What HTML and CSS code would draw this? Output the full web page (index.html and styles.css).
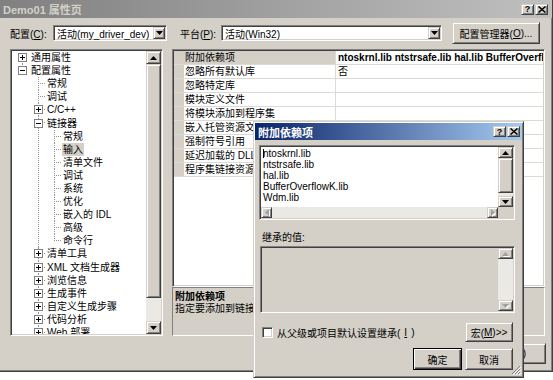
FILE: index.html
```html
<!DOCTYPE html>
<html>
<head>
  <meta charset="utf-8">
  <title>Demo01 属性页</title>
  <link rel="stylesheet" href="styles.css">
</head>
<body>
  <div class="win">
    <div class="caption inactive">
      <span class="caption-text">Demo01 属性页</span>
      <span class="cap-btns">
        <span class="cap-btn raised">?</span>
        <span class="cap-btn raised"><svg width="8" height="7" viewBox="0 0 8 7"><path d="M0.5 0.5l7 6M7.5 0.5l-7 6" stroke="#000" stroke-width="1.5"/></svg></span>
      </span>
    </div>

    <div class="toolbar">
      <span class="lbl lbl-cfg">配置(<u>C</u>):</span>
      <div class="combo combo-cfg">
        <span class="combo-text">活动(my_driver_dev)</span>
        <span class="drop raised"><svg width="7" height="4" viewBox="0 0 7 4"><path d="M0 0h7L3.5 4z"/></svg></span>
      </div>
      <span class="lbl lbl-plat">平台(<u>P</u>):</span>
      <div class="combo combo-plat">
        <span class="combo-text">活动(Win32)</span>
        <span class="drop raised"><svg width="7" height="4" viewBox="0 0 7 4"><path d="M0 0h7L3.5 4z"/></svg></span>
      </div>
      <span class="btn raised btn-mgr">配置管理器(<u>O</u>)...</span>
    </div>

    <div class="content">
      <div class="tree sunken">
        <ul class="tree-list">
          <li class="l0 first">
            <div class="row"><svg class="pm" width="9" height="9" viewBox="0 0 9 9"><rect x=".5" y=".5" width="8" height="8" fill="#fff" stroke="#808080"/><path d="M2 4.5h5M4.5 2v5" stroke="#000"/></svg><span class="t">通用属性</span></div>
          </li>
          <li class="l0 end">
            <div class="row"><svg class="pm" width="9" height="9" viewBox="0 0 9 9"><rect x=".5" y=".5" width="8" height="8" fill="#fff" stroke="#808080"/><path d="M2 4.5h5" stroke="#000"/></svg><span class="t">配置属性</span></div>
            <ul>
              <li class="l1 leaf"><div class="row"><span class="t">常规</span></div></li>
              <li class="l1 leaf"><div class="row"><span class="t">调试</span></div></li>
              <li class="l1"><div class="row"><svg class="pm" width="9" height="9" viewBox="0 0 9 9"><rect x=".5" y=".5" width="8" height="8" fill="#fff" stroke="#808080"/><path d="M2 4.5h5M4.5 2v5" stroke="#000"/></svg><span class="t">C/C++</span></div></li>
              <li class="l1">
                <div class="row"><svg class="pm" width="9" height="9" viewBox="0 0 9 9"><rect x=".5" y=".5" width="8" height="8" fill="#fff" stroke="#808080"/><path d="M2 4.5h5" stroke="#000"/></svg><span class="t">链接器</span></div>
                <ul>
                  <li class="l2"><div class="row"><span class="t">常规</span></div></li>
                  <li class="l2"><div class="row"><span class="t sel">输入</span></div></li>
                  <li class="l2"><div class="row"><span class="t">清单文件</span></div></li>
                  <li class="l2"><div class="row"><span class="t">调试</span></div></li>
                  <li class="l2"><div class="row"><span class="t">系统</span></div></li>
                  <li class="l2"><div class="row"><span class="t">优化</span></div></li>
                  <li class="l2"><div class="row"><span class="t">嵌入的 IDL</span></div></li>
                  <li class="l2"><div class="row"><span class="t">高级</span></div></li>
                  <li class="l2 end"><div class="row"><span class="t">命令行</span></div></li>
                </ul>
              </li>
              <li class="l1"><div class="row"><svg class="pm" width="9" height="9" viewBox="0 0 9 9"><rect x=".5" y=".5" width="8" height="8" fill="#fff" stroke="#808080"/><path d="M2 4.5h5M4.5 2v5" stroke="#000"/></svg><span class="t">清单工具</span></div></li>
              <li class="l1"><div class="row"><svg class="pm" width="9" height="9" viewBox="0 0 9 9"><rect x=".5" y=".5" width="8" height="8" fill="#fff" stroke="#808080"/><path d="M2 4.5h5M4.5 2v5" stroke="#000"/></svg><span class="t">XML 文档生成器</span></div></li>
              <li class="l1"><div class="row"><svg class="pm" width="9" height="9" viewBox="0 0 9 9"><rect x=".5" y=".5" width="8" height="8" fill="#fff" stroke="#808080"/><path d="M2 4.5h5M4.5 2v5" stroke="#000"/></svg><span class="t">浏览信息</span></div></li>
              <li class="l1"><div class="row"><svg class="pm" width="9" height="9" viewBox="0 0 9 9"><rect x=".5" y=".5" width="8" height="8" fill="#fff" stroke="#808080"/><path d="M2 4.5h5M4.5 2v5" stroke="#000"/></svg><span class="t">生成事件</span></div></li>
              <li class="l1"><div class="row"><svg class="pm" width="9" height="9" viewBox="0 0 9 9"><rect x=".5" y=".5" width="8" height="8" fill="#fff" stroke="#808080"/><path d="M2 4.5h5M4.5 2v5" stroke="#000"/></svg><span class="t">自定义生成步骤</span></div></li>
              <li class="l1"><div class="row"><svg class="pm" width="9" height="9" viewBox="0 0 9 9"><rect x=".5" y=".5" width="8" height="8" fill="#fff" stroke="#808080"/><path d="M2 4.5h5M4.5 2v5" stroke="#000"/></svg><span class="t">代码分析</span></div></li>
              <li class="l1"><div class="row"><svg class="pm" width="9" height="9" viewBox="0 0 9 9"><rect x=".5" y=".5" width="8" height="8" fill="#fff" stroke="#808080"/><path d="M2 4.5h5M4.5 2v5" stroke="#000"/></svg><span class="t">Web 部署</span></div></li>
            </ul>
          </li>
        </ul>
        <div class="vscroll">
          <span class="sb-btn raised sb-up"><svg width="7" height="4" viewBox="0 0 7 4"><path d="M0 4h7L3.5 0z"/></svg></span>
          <span class="sb-thumb raised"></span>
          <span class="sb-track"></span>
          <span class="sb-btn raised sb-down"><svg width="7" height="4" viewBox="0 0 7 4"><path d="M0 0h7L3.5 4z"/></svg></span>
        </div>
      </div>

      <div class="props">
        <div class="grid sunken">
          <div class="prow"><span class="gut"></span><span class="pname selected">附加依赖项</span><span class="pval bold">ntoskrnl.lib ntstrsafe.lib hal.lib BufferOverflowK.lib Wdm.lib</span></div>
          <div class="prow"><span class="gut"></span><span class="pname">忽略所有默认库</span><span class="pval">否</span></div>
          <div class="prow"><span class="gut"></span><span class="pname">忽略特定库</span><span class="pval"></span></div>
          <div class="prow"><span class="gut"></span><span class="pname">模块定义文件</span><span class="pval"></span></div>
          <div class="prow"><span class="gut"></span><span class="pname">将模块添加到程序集</span><span class="pval"></span></div>
          <div class="prow"><span class="gut"></span><span class="pname">嵌入托管资源文件</span><span class="pval"></span></div>
          <div class="prow"><span class="gut"></span><span class="pname">强制符号引用</span><span class="pval"></span></div>
          <div class="prow"><span class="gut"></span><span class="pname">延迟加载的 DLL</span><span class="pval"></span></div>
          <div class="prow"><span class="gut"></span><span class="pname">程序集链接资源</span><span class="pval"></span></div>
        </div>
        <div class="desc">
          <div class="desc-title">附加依赖项</div>
          <div class="desc-text">指定要添加到链接命令行的附加项。</div>
        </div>
      </div>
    </div>

    <!-- only the apply button peeks out from under the popup -->
    <div class="footer">
      <span class="btn raised btn-main">应用(<u>A</u>)</span>
    </div>
  </div>

  <!-- 附加依赖项 popup -->
  <div class="dlg">
    <div class="caption active">
      <span class="caption-text">附加依赖项</span>
      <span class="cap-btns">
        <span class="cap-btn raised">?</span>
        <span class="cap-btn raised"><svg width="8" height="7" viewBox="0 0 8 7"><path d="M0.5 0.5l7 6M7.5 0.5l-7 6" stroke="#000" stroke-width="1.5"/></svg></span>
      </span>
    </div>
    <div class="dlg-body">
      <div class="edit sunken">
        <div class="edit-text">
          <div class="line"><span class="caret"></span>ntoskrnl.lib</div>
          <div class="line">ntstrsafe.lib</div>
          <div class="line">hal.lib</div>
          <div class="line">BufferOverflowK.lib</div>
          <div class="line">Wdm.lib</div>
        </div>
        <div class="vscroll small">
          <span class="sb-btn raised"><svg width="7" height="4" viewBox="0 0 7 4"><path d="M0 4h7L3.5 0z"/></svg></span>
          <span class="sb-thumb raised edit-thumb"></span>
          <span class="sb-track"></span>
          <span class="sb-btn raised"><svg width="7" height="4" viewBox="0 0 7 4"><path d="M0 0h7L3.5 4z"/></svg></span>
        </div>
        <div class="hscroll">
          <span class="sb-btn raised hbtn off"><svg width="4" height="7" viewBox="0 0 4 7"><path d="M4 0v7L0 3.5z"/></svg></span>
          <span class="sb-track"></span>
          <span class="sb-btn raised hbtn off"><svg width="4" height="7" viewBox="0 0 4 7"><path d="M0 0v7L4 3.5z"/></svg></span>
        </div>
        <div class="corner"></div>
      </div>

      <div class="inh-label">继承的值:</div>
      <div class="inh sunken">
        <div class="inh-text"></div>
        <div class="vscroll small">
          <span class="sb-btn raised off"><svg width="7" height="4" viewBox="0 0 7 4"><path d="M0 4h7L3.5 0z"/></svg></span>
          <span class="sb-track"></span>
          <span class="sb-btn raised off"><svg width="7" height="4" viewBox="0 0 7 4"><path d="M0 0h7L3.5 4z"/></svg></span>
        </div>
      </div>

      <div class="check-row">
        <label class="check"><span class="box sunken"></span>从父级或项目默认设置继承(<u>I</u>)</label>
        <span class="btn raised btn-macro">宏(<u>M</u>)&gt;&gt;</span>
      </div>

      <div class="btn-row">
        <span class="btn default">确定</span>
        <span class="btn raised btn-cancel">取消</span>
      </div>
    </div>
    <svg class="grip" width="10" height="10" viewBox="0 0 10 10"><path d="M9 1L1 9M9 4L4 9M9 7L7 9" stroke="#808080"/><path d="M10 2L2 10M10 5L5 10M10 8L8 10" stroke="#fff"/></svg>
  </div>
</body>
</html>
```

FILE: styles.css
```css
* {
  box-sizing: border-box;
}

body {
  margin: 0;
  width: 553px;
  height: 380px;
  overflow: hidden;
  position: relative;
  background: #fff;
  color: #000;
  font-family: "Liberation Sans Narrow", "Liberation Sans", "Noto Sans CJK SC", sans-serif;
  font-size: 10px;
}

ul {
  list-style: none;
  margin: 0;
  padding: 0;
}

/* classic 3d edges */
.raised {
  background: #d4d0c8;
  border: 1px solid;
  border-color: #d4d0c8 #404040 #404040 #d4d0c8;
  box-shadow: inset 1px 1px #fff, inset -1px -1px #808080;
}

.sunken {
  border: 1px solid;
  border-color: #808080 #fff #fff #808080;
  box-shadow: inset 1px 1px #404040, inset -1px -1px #d4d0c8;
  padding: 1px;
}

/* main window */
.win {
  width: 553px;
  height: 372px;
  background: #d4d0c8;
  border-right: 1px solid #404040;
  border-bottom: 1px solid #404040;
  box-shadow: inset -1px -1px #808080;
  display: flex;
  flex-direction: column;
}

.caption {
  height: 18px;
  display: flex;
  align-items: center;
  justify-content: space-between;
  padding: 0 4px 0 3px;
  font-weight: bold;
  font-size: 11px;
  flex-shrink: 0;
}

.caption.inactive {
  background: linear-gradient(to right, #808080, #c0c0c0);
  color: #d4d0c8;
}

.caption.active {
  background: linear-gradient(to right, #0a246a, #a6caf0);
  color: #fff;
  height: 17px;
  padding-right: 2px;
}

.cap-btns {
  display: flex;
  gap: 1px;
}

.cap-btn {
  width: 13px;
  height: 11px;
  display: flex;
  align-items: center;
  justify-content: center;
  color: #000;
  font-family: "Liberation Sans", sans-serif;
  font-size: 9px;
  font-weight: bold;
}

.toolbar {
  margin-top: 4px;
  height: 22px;
  padding-left: 10px;
  display: flex;
  align-items: center;
  flex-shrink: 0;
}

.lbl-cfg {
  width: 43px;
}

.lbl-plat {
  width: 41px;
  margin-left: 13px;
}

.combo {
  height: 16px;
  background: #fff;
  border: 1px solid;
  border-color: #808080 #fff #fff #808080;
  box-shadow: inset 1px 1px #404040, inset -1px -1px #d4d0c8;
  padding: 1px;
  display: flex;
  align-items: center;
}

.combo-cfg {
  width: 114px;
}

.combo-plat {
  width: 221px;
}

.combo-text {
  flex: 1;
  padding-left: 2px;
  white-space: nowrap;
  overflow: hidden;
}

.drop {
  width: 12px;
  height: 12px;
  display: flex;
  align-items: center;
  justify-content: center;
}

.btn {
  display: flex;
  align-items: center;
  justify-content: center;
  white-space: nowrap;
}

.btn-mgr {
  margin-left: 10px;
  width: 88px;
  height: 22px;
}

.content {
  margin-top: 5px;
  height: 287px;
  padding-left: 10px;
  display: flex;
  gap: 9px;
  flex-shrink: 0;
}

/* tree */
.tree {
  width: 153px;
  background: #fff;
  display: flex;
}

.tree-list {
  flex: 1;
  overflow: hidden;
  position: relative;
}

.tree li {
  position: relative;
}

.tree li::before {
  content: "";
  position: absolute;
  top: 0;
  bottom: 0;
  border-left: 1px dotted #909090;
}

.tree li.l0::before { left: 10px; }
.tree li.l1::before { left: 26px; }
.tree li.l2::before { left: 42px; }

.tree li.first::before {
  top: 6.5px;
}

.tree li.end::before {
  bottom: auto;
  height: 7px;
}

.row {
  position: relative;
  height: 13.1px;
  display: flex;
  align-items: center;
  white-space: nowrap;
  line-height: 13px;
}

.l1 > .row::before,
.l2 > .row::before {
  content: "";
  position: absolute;
  top: 6px;
  width: 7px;
  border-top: 1px dotted #909090;
}

.l1 > .row::before { left: 26px; }
.l2 > .row::before { left: 42px; }

.l0 > .row { padding-left: 6px; }
.l1 > .row { padding-left: 22px; }
.l1.leaf > .row { padding-left: 35px; }
.l2 > .row { padding-left: 51px; }

.pm {
  position: relative;
  z-index: 1;
  margin-right: 4px;
  flex-shrink: 0;
}

.t.sel {
  background: #d4d0c8;
  padding: 0 1px;
  margin-left: -1px;
}

/* scrollbars */
.vscroll {
  width: 15px;
  display: flex;
  flex-direction: column;
  flex-shrink: 0;
}

.sb-btn {
  height: 13px;
  display: flex;
  align-items: center;
  justify-content: center;
  flex-shrink: 0;
}

.sb-thumb {
  height: 234px;
  flex-shrink: 0;
}

.sb-track {
  flex: 1;
  background: #ebe9e4;
}

.vscroll.small .sb-btn {
  height: 11px;
}

.edit-thumb {
  height: 35px;
}

.off svg {
  fill: #a0a0a0;
  filter: drop-shadow(1px 1px 0 #fff);
}

/* property grid */
.props {
  width: 373px;
  display: flex;
  flex-direction: column;
}

.grid {
  height: 238px;
  background: #fff;
  flex-shrink: 0;
}

.prow {
  display: grid;
  grid-template-columns: 10px 152px 1fr;
  height: 14px;
  border-bottom: 1px solid #dcdad5;
  line-height: 13px;
  white-space: nowrap;
}

.gut {
  background: #d4d0c8;
}

.pname {
  padding-left: 1px;
  border-right: 1px solid #dcdad5;
  overflow: hidden;
}

.pname.selected {
  background: #d4d0c8;
}

.pval {
  padding-left: 2px;
  overflow: hidden;
}

.bold {
  font-weight: bold;
}

.desc {
  flex: 1;
  border: 1px solid;
  border-color: #808080 #fff #fff #808080;
  padding: 3px 2px;
  line-height: 12px;
}

.desc-title {
  font-weight: bold;
}

.footer {
  margin-top: 7px;
  height: 21px;
  display: flex;
  justify-content: flex-end;
  padding-right: 6px;
  flex-shrink: 0;
}

.btn-main {
  width: 73px;
}

/* popup dialog */
.dlg {
  position: absolute;
  left: 253px;
  top: 121px;
  width: 271px;
  height: 257px;
  background: #d4d0c8;
  border: 1px solid;
  border-color: #d4d0c8 #404040 #404040 #d4d0c8;
  box-shadow: inset 1px 1px #fff, inset -1px -1px #808080;
  padding: 1px;
}

.dlg-body {
  padding: 0 7px 0 4px;
}

.edit {
  margin-top: 5px;
  height: 75px;
  background: #fff;
  display: grid;
  grid-template-columns: 1fr 15px;
  grid-template-rows: 1fr 11px;
}

.edit-text {
  padding: 1px 0 0 2px;
  line-height: 11px;
  overflow: hidden;
}

.line {
  position: relative;
  white-space: nowrap;
}

.caret {
  display: inline-block;
  width: 1px;
  height: 9px;
  background: #000;
  vertical-align: -1px;
  margin-right: -1px;
}

.hscroll {
  display: flex;
}

.hbtn {
  width: 11px;
  height: 11px;
}

.corner {
  background: #d4d0c8;
}

.inh-label {
  margin-top: 11px;
  height: 15px;
  padding-left: 3px;
  line-height: 13px;
}

.inh {
  margin-left: 1px;
  height: 67px;
  display: flex;
  background: #d4d0c8;
}

.inh-text {
  flex: 1;
}

.check-row {
  margin-top: 9px;
  height: 20px;
  display: flex;
  align-items: center;
  justify-content: space-between;
}

.check {
  display: flex;
  align-items: center;
  gap: 4px;
  padding-left: 3px;
}

.box {
  width: 11px;
  height: 11px;
  background: #fff;
}

.btn-macro {
  width: 48px;
  height: 20px;
  margin-right: 2px;
}

.btn-row {
  margin-top: 6px;
  height: 22px;
  display: flex;
  justify-content: flex-end;
  gap: 3px;
  padding-right: 2px;
}

.btn.default {
  width: 49px;
  background: #d4d0c8;
  border: 1px solid #000;
  box-shadow: inset 1px 1px #fff, inset -1px -1px #404040, inset -2px -2px #808080;
}

.btn-cancel {
  width: 48px;
}

.grip {
  position: absolute;
  right: 2px;
  bottom: 2px;
}
```
